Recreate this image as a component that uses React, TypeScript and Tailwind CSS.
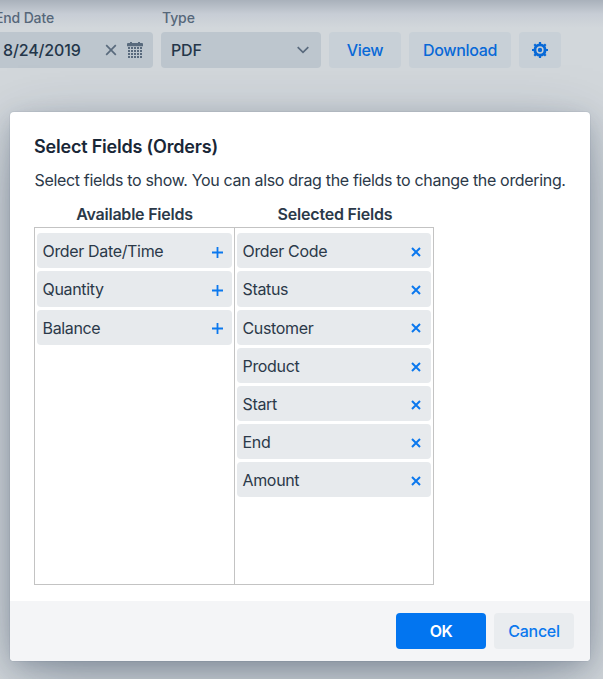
import { useState } from "react";

const PlusIcon = () => (
    <svg className="w-[11px] h-[11px]" viewBox="0 0 11 11" fill="none" stroke="currentColor" strokeWidth="1.8">
        <path d="M5.5 0v11M0 5.5h11" />
    </svg>
);

const CrossIcon = ({ className }: any) => (
    <svg className={className} viewBox="0 0 10 10" fill="none" stroke="currentColor">
        <path d="M1 1l8 8M9 1l-8 8" />
    </svg>
);

const CalendarIcon = () => (
    <svg className="w-4 h-[17px]" viewBox="0 0 16 17" fill="currentColor">
        <path d="M3 0h2v1h6V0h2v1h2a1 1 0 0 1 1 1v2.2H0V2a1 1 0 0 1 1-1h2z" />
        {[5, 8, 11, 14].map((y) =>
            [1, 4, 7, 10, 13].map((x) => <rect key={`${x}-${y}`} x={x} y={y} width="2" height="2" />)
        )}
    </svg>
);

const CogIcon = () => (
    <svg className="w-4 h-4" viewBox="0 0 16 16" fill="none" stroke="currentColor">
        <circle cx="8" cy="8" r="5.1" strokeWidth="2.9" />
        <circle cx="8" cy="8" r="2.2" fill="currentColor" stroke="none" />
        <path strokeWidth="2.2" d="M8 0v2.5M8 13.5V16M0 8h2.5M13.5 8H16M2.3 2.3l1.8 1.8M11.9 11.9l1.8 1.8M13.7 2.3l-1.8 1.8M4.1 11.9l-1.8 1.8" />
    </svg>
);

const FieldRow = ({ label, selected, onClick }: any) => (
    <li className="h-[35.15px] pt-[0.85px] pl-[5.5px] pr-[9.5px] rounded bg-[#e7eaed] flex items-center justify-between">
        <span className="tracking-[-0.34px]">{label}</span>
        <button onClick={onClick} className="text-[#0b78ee] pt-[1.6px]">
            {selected ? <CrossIcon className="w-[10px] h-[10px] mr-[0.5px] stroke-[2]" /> : <PlusIcon />}
        </button>
    </li>
);

const Toolbar = () => (
    <header className="pt-[9px] flex gap-2 text-[#24364a] font-medium">
        <div className="w-[153px] shrink-0">
            <label className="block h-[23px] -ml-[5px] text-[14px] leading-[18px] text-[#56677a] tracking-[-0.15px]">End Date</label>
            <div className="h-9 pl-[3px] pr-2.5 rounded-r bg-[#bdc6ce] flex items-center">
                <span className="grow tracking-[-0.15px]">8/24/2019</span>
                <CrossIcon className="w-3 h-3 mr-2.5 stroke-[1.4] text-[#596a7d]" />
                <span className="text-[#596a7d]"><CalendarIcon /></span>
            </div>
        </div>
        <div className="w-40 shrink-0">
            <label className="block h-[23px] pl-px text-[14px] leading-[18px] text-[#56677a] tracking-[-0.1px]">Type</label>
            <div className="h-9 pl-2.5 pr-3 rounded bg-[#bdc6ce] flex items-center justify-between">
                <span className="tracking-[-0.2px]">PDF</span>
                <svg className="w-3 h-2 text-[#596a7d]" viewBox="0 0 12 8" fill="none" stroke="currentColor" strokeWidth="1.7">
                    <path d="M.7 1.2L6 6.3l5.3-5.1" />
                </svg>
            </div>
        </div>
        <div className="pt-[23px] flex gap-2 text-[#0869d7]">
            <button className="w-[72px] h-9 rounded bg-[#c8d0d7] tracking-[-0.35px]">View</button>
            <button className="w-[102px] h-9 rounded bg-[#c8d0d7] tracking-[-0.35px]">Download</button>
            <button className="w-[42px] h-9 rounded bg-[#c8d0d7] flex items-center justify-center"><CogIcon /></button>
        </div>
    </header>
);

const App = () => {
    const [available, setAvailable] = useState(["Order Date/Time", "Quantity", "Balance"]);
    const [selected, setSelected] = useState(["Order Code", "Status", "Customer", "Product", "Start", "End", "Amount"]);

    const add = (field: string) => {
        setAvailable(available.filter((f) => f !== field));
        setSelected([...selected, field]);
    };

    const remove = (field: string) => {
        setSelected(selected.filter((f) => f !== field));
        setAvailable([...available, field]);
    };

    return (
        <div className="relative w-[603px] h-[679px] overflow-hidden bg-[#d2d7db] bg-[linear-gradient(#a9b1bb,#c7cdd5_14px,#d2d7db_28px)] font-['Inter',sans-serif] text-[16px] leading-5 text-[#2b3949]">
            <Toolbar />
            <section className="absolute left-2.5 top-28 w-[580px] h-[549px] rounded bg-white overflow-hidden flex flex-col shadow-[0_0_0_1px_rgba(25,45,70,0.05),0_6px_24px_-3px_rgba(25,45,70,0.25),0_18px_64px_-8px_rgba(25,45,70,0.38)]">
                <div className="grow pl-6 pt-6">
                    <h2 className="h-[34px] text-[18px] leading-[22px] font-semibold text-[#192737] tracking-[-0.2px]">Select Fields (Orders)</h2>
                    <p className="h-[34px] pl-[0.5px] whitespace-nowrap tracking-[-0.33px]">Select fields to show. You can also drag the fields to change the ordering.</p>
                    <div className="w-[401px] flex text-center font-semibold">
                        <h3 className="w-[201px] h-[23px] tracking-[-0.22px]">Available Fields</h3>
                        <h3 className="w-[200px] h-[23px] tracking-[-0.2px]">Selected Fields</h3>
                    </div>
                    <div className="w-[400px] h-[358px] border border-[#c3c3c3] flex">
                        <ul className="w-[200px] border-r border-[#c3c3c3] pt-[5.3px] px-0.5 flex flex-col gap-[3px]">
                            {available.map((f) => <FieldRow key={f} label={f} onClick={() => add(f)} />)}
                        </ul>
                        <ul className="grow pt-[5.3px] px-0.5 flex flex-col gap-[3px]">
                            {selected.map((f) => <FieldRow key={f} label={f} selected onClick={() => remove(f)} />)}
                        </ul>
                    </div>
                </div>
                <footer className="h-[60px] px-4 bg-[#f4f5f7] flex items-center justify-end gap-2 font-medium">
                    <button className="w-[90px] h-9 rounded bg-[#0275f0] text-white font-semibold tracking-[-0.4px]">OK</button>
                    <button className="w-20 h-9 rounded bg-[#e9ecef] text-[#0b78ee] tracking-[-0.3px]">Cancel</button>
                </footer>
            </section>
        </div>
    );
};

export default App;
